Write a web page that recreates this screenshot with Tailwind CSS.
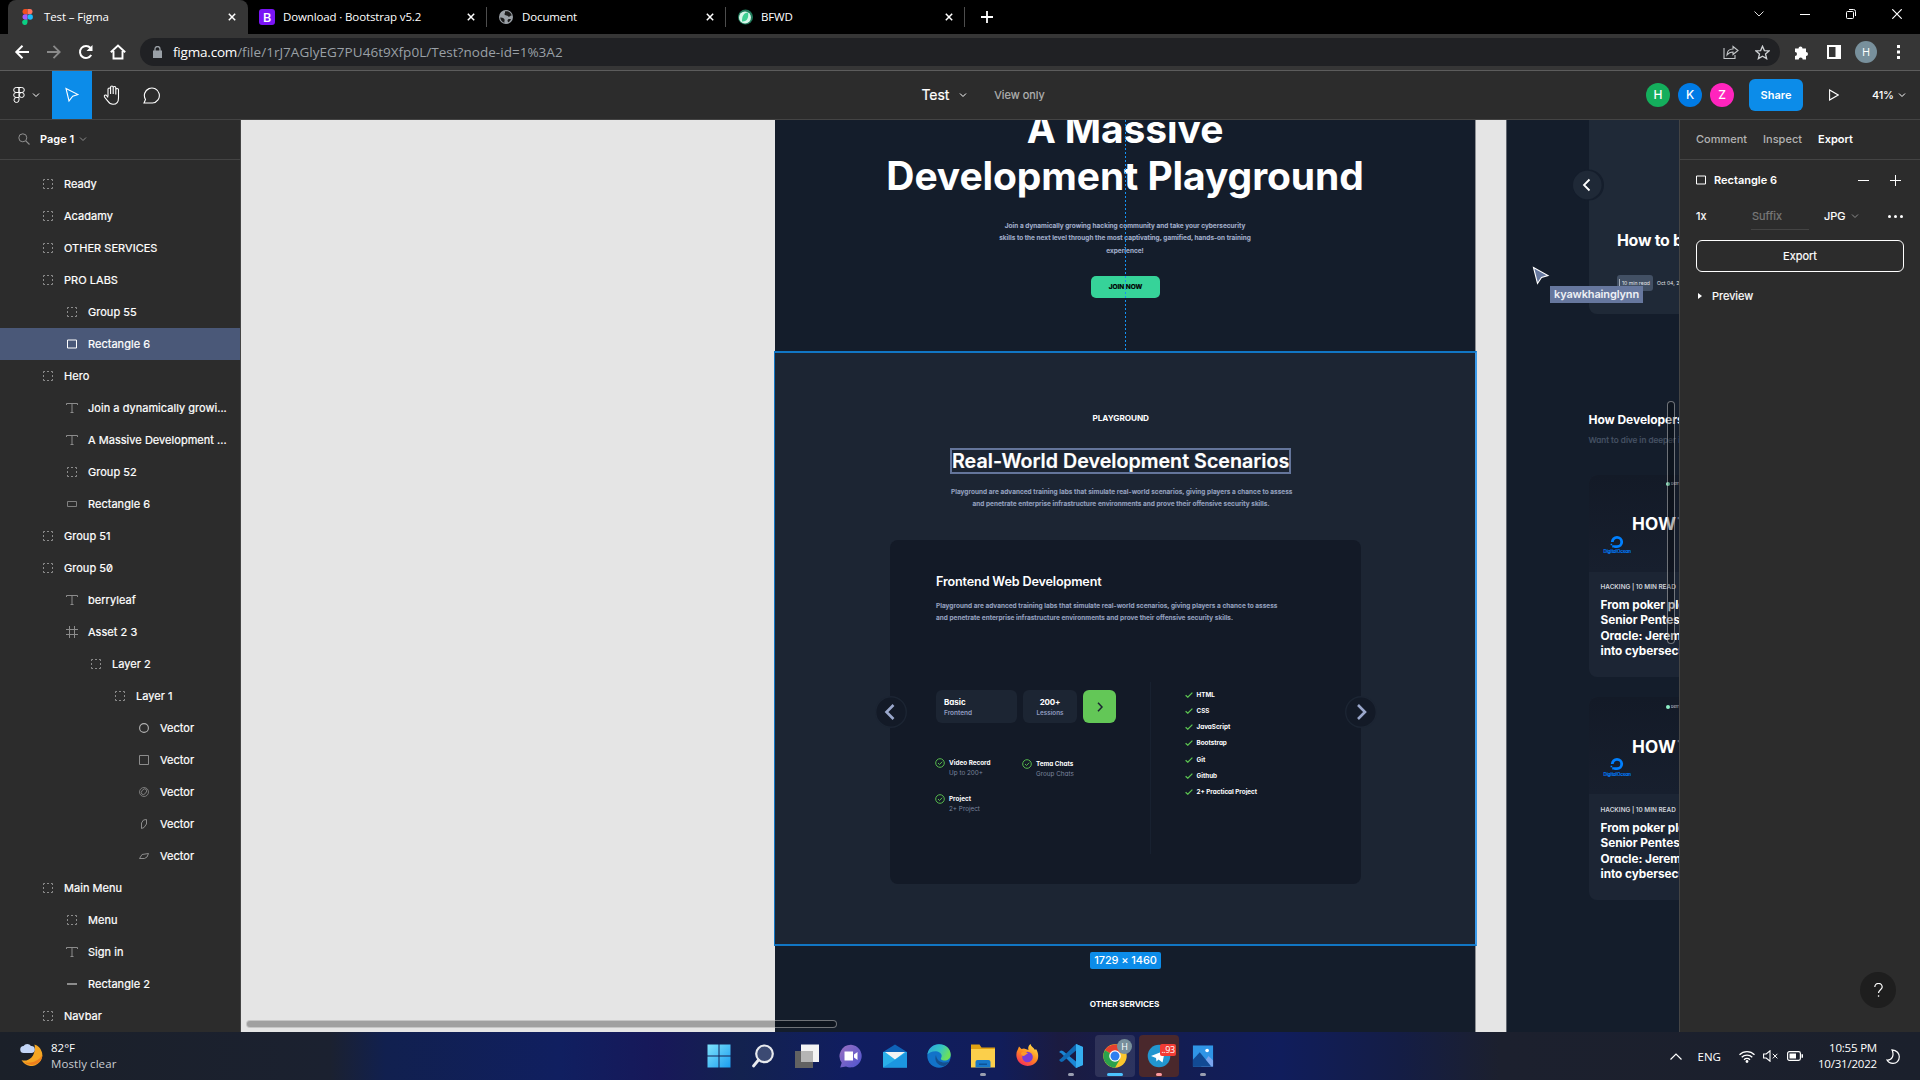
<!DOCTYPE html>
<html lang="en">
<head>
<meta charset="utf-8">
<title>Test – Figma</title>
<script src="https://cdn.jsdelivr.net/npm/@tailwindcss/browser@4"></script>
</head>
<body class="w-[1920px] h-[1080px] overflow-hidden flex flex-col bg-black font-['Inter',sans-serif] text-white">

<!-- shared icons -->
<svg class="hidden">
  <symbol id="i-group" viewBox="0 0 10 10"><path d="M.5 2V.5H2M4 .5h2M8 .5h1.5V2M9.500 4v2M9.500 8v1.500H8M6 9.500H4M2 9.500H.5V8M.5 6V4" fill="none" stroke="#8c8c8c"/></symbol>
  <symbol id="i-text" viewBox="0 0 12 10"><path d="M.5 2V.5h11V2M6 .5v9M4.500 9.500h3" fill="none" stroke="#8c8c8c"/></symbol>
  <symbol id="i-rect" viewBox="0 0 10 10"><path d="M.5 1h9v8h-9z" fill="none" stroke="currentColor"/></symbol>
  <symbol id="i-flat" viewBox="0 0 10 10"><path d="M.5 2.500h9v5h-9z" fill="none" stroke="#808080"/></symbol>
  <symbol id="i-line" viewBox="0 0 10 10"><path d="M0 5h10" stroke="#8c8c8c" stroke-width="2"/></symbol>
  <symbol id="i-frame" viewBox="0 0 12 12"><path d="M3.500 0v12M8.500 0v12M0 3.500h12M0 8.500h12" stroke="#8c8c8c"/></symbol>
  <symbol id="i-circle" viewBox="0 0 10 10"><circle cx="5" cy="5" r="4.400" fill="none" stroke="#b3b3b3" stroke-width="1.100"/></symbol>
  <symbol id="i-square" viewBox="0 0 10 10"><path d="M.5.5h9v9h-9z" fill="none" stroke="#8c8c8c"/></symbol>
  <symbol id="i-swirl" viewBox="0 0 10 10"><g fill="none" stroke="#8c8c8c" stroke-width=".8"><circle cx="5" cy="5" r="4.500"/><ellipse cx="5.200" cy="4.800" rx="3.200" ry="2.200" transform="rotate(-50 5 5)"/></g></symbol>
  <symbol id="i-leaf" viewBox="0 0 10 10"><path d="M2.500 9.500V4L4.500 1l3-.5V5L5 8.500z" fill="none" stroke="#8c8c8c"/></symbol>
  <symbol id="i-leaf2" viewBox="0 0 10 10"><path d="M.5 7.500L3 3.500l6.500-1L8 6 5.500 7.500z" fill="none" stroke="#8c8c8c"/></symbol>
  <symbol id="i-down" viewBox="0 0 8 8"><path d="M1 2.500l3 3 3-3" fill="none" stroke="currentColor"/></symbol>
  <symbol id="i-x" viewBox="0 0 8 8"><path d="M.8.8l6.400 6.400M7.200.8L.8 7.200" stroke="#fff" stroke-width="1.500"/></symbol>
  <symbol id="i-check" viewBox="0 0 8 6"><path d="M.6 3.200L2.800 5.200 7.400.6" fill="none" stroke="#5cc551" stroke-width="1.250"/></symbol>
  <symbol id="i-badge" viewBox="0 0 10 10"><g fill="none" stroke="#56b84c"><circle cx="5" cy="5" r="4.300"/><path d="M3 5l1.500 1.500L7.200 3.700"/></g></symbol>
  <symbol id="i-ocean" viewBox="0 0 14 14"><path d="M7 11.700A4.700 4.700 0 1 0 2.300 7" fill="none" stroke="#0080ff" stroke-width="2.800"/><path d="M4.300 10.300H7V13H4.300zM2.200 10.300h2.100v2.100H2.200zM.6 8.700h1.600v1.600H.6z" fill="#0080ff"/></symbol>
</svg>

<!-- browser tabs -->
<div class="h-[34px] shrink-0 flex items-stretch font-['Open_Sans',sans-serif] text-[11.5px] tracking-[-0.13px]">
  <div class="ml-2 w-[240px] flex items-center rounded-t-lg bg-[#363636] pl-[14px] pr-[12px]">
    <svg class="w-[11px] h-4 mr-[11px]" viewBox="0 0 11 16"><path d="M5.500 0H2.700a2.700 2.700 0 0 0 0 5.330h2.800z" fill="#f24e1e"/><path d="M5.500 0h2.800a2.700 2.700 0 0 1 0 5.330H5.500z" fill="#ff7262"/><path d="M5.500 5.330H2.700a2.700 2.700 0 0 0 0 5.330h2.800z" fill="#a259ff"/><circle cx="8.200" cy="8" r="2.700" fill="#1abcfe"/><path d="M5.500 10.660H2.700a2.680 2.680 0 1 0 2.800 2.700z" fill="#0acf83"/></svg>
    <span class="flex-1">Test – Figma</span><svg class="w-2 h-2"><use href="#i-x"/></svg>
  </div>
  <div class="w-[238px] flex items-center pl-[11px] pr-[11px]">
    <span class="size-4 rounded-[3px] bg-[#7a14f5] mr-2 grid place-items-center text-[13px] font-semibold leading-none">B</span>
    <span class="flex-1">Download · Bootstrap v5.2</span><svg class="w-2 h-2"><use href="#i-x"/></svg>
  </div>
  <div class="w-[239px] flex items-center pr-[11px]"><span class="w-px h-5 bg-[#4d4d4d] mr-3"></span>
    <svg class="w-[14px] h-[14px] mr-[9px]" viewBox="0 0 14 14"><circle cx="7" cy="7" r="7" fill="#9aa0a6"/><path d="M1.200 7.500C3 7.200 5 8 5.500 9.500c.5 1.200-.5 1.500 0 3.200C3 12 1.300 10 1.200 7.500zM6 1.500c3-.8 6 1 6.700 4-1.500-.2-1.600 1-2.700 1.200-1.200.2-.8-1.200-2.500-1.200S4.700 4 6 3zM9 9.500c1-.8 2-.6 3-.2-.6 1.400-1.400 2.300-2.700 3-.7-.8-1.200-2-.3-2.800z" fill="#1c1c1c"/></svg>
    <span class="flex-1">Document</span><svg class="w-2 h-2"><use href="#i-x"/></svg>
  </div>
  <div class="w-[239px] flex items-center pr-[11px]"><span class="w-px h-5 bg-[#4d4d4d] mr-3"></span>
    <svg class="w-[15px] h-4 mr-2" viewBox="0 0 15 16"><circle cx="7.500" cy="8" r="7.500" fill="#1f7a5a"/><circle cx="7" cy="8.500" r="6" fill="#d8f7ea"/><path d="M10 3.500C5.500 4 4 7 4 12.500c5 .5 7-4 6-9z" fill="#3ecf93"/></svg>
    <span class="flex-1">BFWD</span><svg class="w-2 h-2"><use href="#i-x"/></svg>
  </div>
  <div class="flex-1 flex items-center"><span class="w-px h-5 bg-[#4d4d4d] mr-4"></span>
    <svg class="w-3 h-3" viewBox="0 0 12 12"><path d="M6 0v12M0 6h12" stroke="#fff" stroke-width="1.800"/></svg>
  </div>
  <div class="flex items-start pt-[9px] pr-[18px] gap-9">
    <svg class="w-[10px] h-[10px]" viewBox="0 0 10 10"><path d="M.5 2.500L5 7l4.500-4.500" fill="none" stroke="#ddd"/></svg>
    <svg class="w-[10px] h-[10px]" viewBox="0 0 10 10"><path d="M0 5.500h10" stroke="#fff"/></svg>
    <svg class="w-[10px] h-[10px]" viewBox="0 0 10 10"><path d="M3 .5h4.500a2 2 0 0 1 2 2V7M1.500 2.500h5a1 1 0 0 1 1 1v5a1 1 0 0 1-1 1h-5a1 1 0 0 1-1-1v-5a1 1 0 0 1 1-1z" fill="none" stroke="#fff"/></svg>
    <svg class="w-[10px] h-[10px]" viewBox="0 0 10 10"><path d="M.3.3l9.400 9.400M9.700.3L.3 9.700" stroke="#fff" stroke-width="1.200"/></svg>
  </div>
</div>

<!-- address row -->
<div class="h-[37px] shrink-0 bg-[#363636] border-b border-[#5c5c5c] flex items-center pl-[14px] pr-[20px]">
  <div class="flex items-center gap-4 w-[126px]">
    <svg class="size-4" viewBox="0 0 16 16"><path d="M15 8H2.500M8.500 1.800L2.300 8l6.200 6.200" fill="none" stroke="#fff" stroke-width="2"/></svg>
    <svg class="size-4" viewBox="0 0 16 16"><path d="M1 8h12.500M7.500 1.800L13.700 8l-6.200 6.200" fill="none" stroke="#8a8a8a" stroke-width="1.800"/></svg>
    <svg class="size-4" viewBox="0 0 16 16"><path d="M13.200 11A6 6 0 1 1 12.500 4" fill="none" stroke="#fff" stroke-width="2"/><path d="M14.500 1v6h-6z" fill="#fff"/></svg>
    <svg class="size-4" viewBox="0 0 16 16"><path d="M3.500 7v7.500h9V7M.8 8.300L8 1.500l7.200 6.800" fill="none" stroke="#fff" stroke-width="1.900"/></svg>
  </div>
  <div class="w-[1640px] h-7 rounded-full bg-[#202124] flex items-center pl-[13px] pr-[10px]">
    <svg class="w-[9px] h-3 mr-[11px]" viewBox="0 0 9 12"><path d="M0 4.500h9V12H0z" fill="#9aa0a6"/><path d="M2 5V3a2.500 2.500 0 0 1 5 0v2" fill="none" stroke="#9aa0a6" stroke-width="1.300"/></svg>
    <span class="flex-1 font-['Open_Sans',sans-serif] text-[13.500px] tracking-[0.030px] text-[#9aa0a6]"><span class="text-white tracking-[-0.200px]">figma.com</span>/file/1rJ7AGlyEG7PU46t9Xfp0L/Test?node-id=1%3A2</span>
    <svg class="w-4 h-4 mr-4" viewBox="0 0 16 16"><path d="M1 4v10.500h11V11M10 2.500V5C6 5 4 7.500 4 11c1.500-2 3.300-3 6-3v2.500l5-4z" fill="none" stroke="#c4c7c9" stroke-width="1.100"/></svg>
    <svg class="w-[15px] h-[15px]" viewBox="0 0 16 16"><path d="M8 1.300l2 4.600 5 .4-3.800 3.300 1.200 4.900L8 11.900l-4.400 2.600 1.200-4.900L1 6.300l5-.4z" fill="none" stroke="#d0d3d6" stroke-width="1.400"/></svg>
  </div>
  <div class="flex-1 flex items-center justify-end">
    <svg class="size-[15px] mr-[18px]" viewBox="0 0 15 15"><path d="M1 3.500h3.500a2 2 0 1 1 4 0H12V7a2 2 0 1 1 0 4v3.500H8.700a2 2 0 1 0-4 0H1V11a2 2 0 1 0 0-4z" fill="#fff"/></svg>
    <svg class="size-[14px] mr-[14px]" viewBox="0 0 14 14"><path d="M0 0h14v14H0zM2 2v10h6.500V2z" fill="#fff" fill-rule="evenodd"/></svg>
    <span class="size-[22px] rounded-full bg-[#78909c] grid place-items-center text-[11px] font-['Open_Sans',sans-serif] mr-[20px]">H</span>
    <svg class="w-[3px] h-[14px]" viewBox="0 0 3 14"><path d="M0 0h3v3H0zM0 5.500h3v3H0zM0 11h3v3H0z" fill="#fff"/></svg>
  </div>
</div>

<!-- editor toolbar -->
<div class="h-[49px] shrink-0 bg-[#2c2c2c] border-b border-[#444] flex items-center">
  <div class="w-[52px] flex items-center pl-[13px]">
    <svg class="w-3 h-4" viewBox="0 0 12 16"><path d="M6 .5H3.200a2.500 2.500 0 0 0 0 5H6zM6 .5h2.800a2.500 2.500 0 0 1 0 5H6zM6 5.500H3.200a2.500 2.500 0 0 0 0 5H6zM8.700 5.500a2.500 2.500 0 1 1 0 5 2.500 2.500 0 0 1 0-5zM6 10.500H3.200A2.500 2.500 0 1 0 6 13z" fill="none" stroke="#fff"/></svg>
    <svg class="size-2 ml-[7px]"><use href="#i-down"/></svg>
  </div>
  <div class="w-10 h-full bg-[#0c8ce9] grid place-items-center"><svg class="w-[14px] h-4 " viewBox="0 0 14 16"><path d="M1 1.500l12 6-5.300 1.600L4 14z" fill="none" stroke="#fff" stroke-width="1.100"/></svg></div>
  <div class="w-10 grid place-items-center"><svg class="w-[19px] h-5" viewBox="0 0 19 20"><path d="M5 11.500V4.300a1.300 1.300 0 0 1 2.600 0V9 2.300a1.300 1.300 0 0 1 2.600 0V9 2.800a1.300 1.300 0 0 1 2.600 0V9.500 4.800a1.300 1.300 0 0 1 2.700 0V13c0 4-2 6.300-5.500 6.300-2.800 0-4-1.300-5-3L1.500 12C.8 10.300 2.300 9.500 3.400 10.300L5 12.500" fill="none" stroke="#fff" stroke-width="1.100"/></svg></div>
  <div class="w-10 grid place-items-center"><svg class="w-[18px] h-[17px]" viewBox="0 0 18 17"><path d="M1 16l1.500-3.500A7.500 7.500 0 1 1 9.500 16z" fill="none" stroke="#fff" stroke-width="1.100"/></svg></div>
  <div class="ml-[749.500px] flex items-center text-sm tracking-[-0.100px] [-webkit-text-stroke:0.200px]">Test<svg class="size-2 ml-[10px]"><use href="#i-down"/></svg></div>
  <span class="ml-[27px] flex-1 text-[11px] text-[#b3b3b3] [-webkit-text-stroke:0.200px]">View only</span>
  <div class="flex items-center gap-2 text-[12px] font-medium">
    <span class="size-6 rounded-full bg-[#14ae5c] grid place-items-center">H</span>
    <span class="size-6 rounded-full bg-[#007be5] grid place-items-center">K</span>
    <span class="size-6 rounded-full bg-[#ff24bd] grid place-items-center">Z</span>
  </div>
  <div class="ml-[15px] w-[54px] h-8 rounded-md bg-[#0c8ce9] grid place-items-center text-[11px] font-semibold">Share</div>
  <svg class="ml-[26px] w-[10px] h-3" viewBox="0 0 10 12"><path d="M.6 1v10L9.200 6z" fill="none" stroke="#fff" stroke-width="1.100"/></svg>
  <span class="ml-[33px] w-[20px] text-[11px] tracking-[-0.200px] whitespace-nowrap font-medium">41%</span>
  <svg class="size-2 ml-[6px] mr-[14px]"><use href="#i-down"/></svg>
</div>

<!-- workspace -->
<div class="h-[912px] shrink-0 flex">

  <!-- layers panel -->
  <aside class="w-[241px] shrink-0 bg-[#2c2c2c] border-r border-[#444] flex flex-col overflow-hidden">
    <div class="h-10 shrink-0 border-b border-[#444] flex items-center pl-[18px] pb-px">
      <svg class="w-[12px] h-[12px]" viewBox="0 0 12 12"><circle cx="4.800" cy="4.800" r="4" fill="none" stroke="#909090"/><path d="M7.800 7.800L11.500 11.500" stroke="#909090" stroke-width="1.100"/></svg>
      <span class="ml-[10px] text-[11px] font-semibold">Page 1</span>
      <svg class="size-2 ml-[5px] text-[#8c8c8c]"><use href="#i-down"/></svg>
    </div>
    <div id="layers" class="pt-2 text-[11px] leading-8 tracking-[0.035px] [-webkit-text-stroke:0.220px]"></div>
  </aside>

  <!-- canvas -->
  <main class="relative w-[1438px] shrink-0 bg-[#e5e5e5] overflow-hidden">

    <!-- landing page frame; origin of the canvas is (241,120) -->
    <section class="absolute left-[534px] top-0 w-[701px] h-full bg-[#141d2b] border-r border-[#8d8f94] overflow-hidden">
      <h1 class="absolute left-0 -top-[15px] w-full text-center text-[39px] leading-[47px] font-bold tracking-[-0.100px]">A Massive<br>Development Playground</h1>
      <p class="absolute left-0 top-[100px] w-full text-center text-[6.500px] leading-[12.300px] tracking-[0.020px] font-semibold text-[#a4b1cd] [-webkit-text-stroke:0.150px]">Join a dynamically growing hacking community and take your cybersecurity<br>skills to the next level through the most captivating, gamified, hands-on training<br>experience!</p>
      <div class="absolute left-[316px] top-[156px] w-[69px] h-[22px] rounded-[5px] bg-[#36d399] grid place-items-center text-[6.500px] leading-none pt-px font-bold text-black [-webkit-text-stroke:0.200px]">JOIN NOW</div>
      <div class="absolute left-0 top-[878.500px] w-[699px] text-center text-[8.200px] leading-[10px] font-bold tracking-[-0.060px]">OTHER SERVICES</div>
    </section>

    <!-- selected section -->
    <section class="absolute left-[533px] top-[231px] w-[703px] h-[595px] bg-[#1c2533] border-2 border-l border-[#1176c4] border-r-[#3b9bea]">
      <div class="absolute left-[317.500px] top-[60px] text-[8.200px] leading-[10px] font-bold tracking-[-0.060px]">PLAYGROUND</div>
      <h2 class="absolute left-[175px] top-[95px] w-[341px] h-[26px] border-2 border-[#64759b] text-center text-[19.700px] leading-[22px] font-semibold whitespace-nowrap [-webkit-text-stroke:0.200px]">Real-World Development Scenarios</h2>
      <p class="absolute left-[176px] top-[132.500px] w-[340px] text-center text-[6.500px] leading-[12.200px] tracking-[0.030px] font-semibold text-[#97a3c0] whitespace-nowrap [-webkit-text-stroke:0.150px]">Playground are advanced training labs that simulate real-world scenarios, giving players a chance to assess<br>and penetrate enterprise infrastructure environments and prove their offensive security skills.</p>

      <div class="absolute left-[115px] top-[187px] w-[471px] h-[344px] rounded-lg bg-[#131a27]">
        <h3 class="absolute left-[46px] top-[34px] text-[12.600px] leading-4 tracking-[-0.150px] font-semibold whitespace-nowrap">Frontend Web Development</h3>
        <p class="absolute left-[46px] top-[59.500px] text-[6.500px] leading-[12.200px] tracking-[0.030px] font-semibold text-[#97a3c0] whitespace-nowrap [-webkit-text-stroke:0.150px]">Playground are advanced training labs that simulate real-world scenarios, giving players a chance to assess<br>and penetrate enterprise infrastructure environments and prove their offensive security skills.</p>
        <div class="absolute left-[46px] top-[150px] flex gap-[6px] [font-feature-settings:'cv11'] font-semibold">
          <div class="w-[81px] h-[33px] rounded-md bg-[#1c2533] pl-2 pt-[6.500px]"><div class="text-[8px] leading-[11px] font-bold">Basic</div><div class="text-[6.500px] leading-[11px] text-[#909cc0]">Frontend</div></div>
          <div class="w-[54px] h-[33px] rounded-md bg-[#1c2533] pt-[6.500px] text-center"><div class="text-[8px] leading-[11px] font-bold tracking-[-0.200px]">200+</div><div class="text-[6.300px] leading-[11px] text-[#909cc0]">Lessions</div></div>
          <div class="w-[33px] h-[33px] rounded-md bg-[#63c757] grid place-items-center"><svg class="w-[6px] h-[10px]" viewBox="0 0 6 10"><path d="M1 .8L5 5 1 9.200" fill="none" stroke="#1c2433" stroke-width="1.500"/></svg></div>
        </div>
        <div class="absolute left-[45px] top-[218px] grid grid-cols-[87px_87px] gap-y-[16px] text-[6.350px] leading-[10px] [font-feature-settings:'cv11']">
          <div class="flex"><svg class="size-[10px] mr-1"><use href="#i-badge"/></svg><div><div class="font-bold">Video Record</div><div class="text-[#7c869f]">Up to 200+</div></div></div>
          <div class="flex pt-[1px]"><svg class="size-[10px] mr-1"><use href="#i-badge"/></svg><div><div class="font-bold">Tema Chats</div><div class="text-[#7c869f]">Group Chats</div></div></div>
          <div class="flex -mt-px"><svg class="size-[10px] mr-1"><use href="#i-badge"/></svg><div><div class="font-bold">Project</div><div class="text-[#7c869f]">2+ Project</div></div></div>
        </div>
        <div class="absolute left-[260px] top-[142px] w-px h-[172px] bg-[#182130]"></div>
        <ul class="absolute left-[294.500px] top-[146.700px] text-[6.300px] leading-[16.220px] font-bold [font-feature-settings:'cv11'] whitespace-nowrap">
          <li class="flex items-center gap-1"><svg class="w-2 h-[6px]"><use href="#i-check"/></svg>HTML</li>
          <li class="flex items-center gap-1"><svg class="w-2 h-[6px]"><use href="#i-check"/></svg>CSS</li>
          <li class="flex items-center gap-1"><svg class="w-2 h-[6px]"><use href="#i-check"/></svg>JavaScript</li>
          <li class="flex items-center gap-1"><svg class="w-2 h-[6px]"><use href="#i-check"/></svg>Bootstrap</li>
          <li class="flex items-center gap-1"><svg class="w-2 h-[6px]"><use href="#i-check"/></svg>Git</li>
          <li class="flex items-center gap-1"><svg class="w-2 h-[6px]"><use href="#i-check"/></svg>Github</li>
          <li class="flex items-center gap-1"><svg class="w-2 h-[6px]"><use href="#i-check"/></svg>2+ Practical Project</li>
        </ul>
        <svg class="absolute -left-[15px] top-[156px] size-8" viewBox="0 0 32 32"><circle cx="16" cy="16" r="15.300" fill="#131a27" stroke="#1c2533" stroke-width="1.400"/><path d="M18.500 9l-7 7 7 7" fill="none" stroke="#9ba8cc" stroke-width="2.600"/></svg>
        <svg class="absolute left-[455px] top-[156px] size-8" viewBox="0 0 32 32"><circle cx="16" cy="16" r="15.300" fill="#131a27" stroke="#1c2533" stroke-width="1.400"/><path d="M13 9l7 7-7 7" fill="none" stroke="#9ba8cc" stroke-width="2.600"/></svg>
      </div>
    </section>
    <div class="absolute left-[849px] top-[832px] w-[71px] h-[17px] rounded-[2px] bg-[#0c8ce9] text-center text-[11px] leading-[17px] font-medium tracking-[-0.100px]">1729 × 1460</div>
    <svg class="absolute left-[884px] top-0 w-px h-[232px]" viewBox="0 0 1 232"><path d="M.5 0v232" stroke="#1593f5" stroke-dasharray="2 2"/></svg>

    <!-- blog frame -->
    <section class="absolute left-[1265px] top-0 w-[174px] h-full bg-[#141d2b] border-l border-[#60656f] overflow-hidden [font-feature-settings:'cv11'] whitespace-nowrap">
      <div class="absolute left-[82px] top-0 w-[120px] h-[194px] rounded-bl-lg bg-[#1f2937]">
        <svg class="absolute -left-[17px] top-[49px] size-8" viewBox="0 0 32 32"><circle cx="16.500" cy="16" r="15.500" fill="#151e2c"/><circle cx="15.300" cy="16" r="14.300" fill="#1f2937"/><path d="M17.500 10.500L12 16l5.500 5.500" fill="none" stroke="#fff" stroke-width="1.800"/></svg>
        <div class="absolute left-[28px] top-[110.500px] text-[15.900px] leading-5 tracking-[-0.250px] font-bold">How to build</div>
        <div class="absolute left-[28px] top-[155px] flex items-center gap-1 text-[5.100px] leading-[16px] text-[#e3e6ea]"><span class="w-9 h-4 rounded-[3px] bg-[#425064] flex items-center pl-[2px]"><span class="w-px h-[9px] bg-[#a8b0bb] mr-[2px]"></span>10 min read</span>Oct 04, 2022</div>
      </div>
      <div class="absolute left-[81.500px] top-[291.500px] text-[12px] leading-4 font-bold tracking-[-0.050px]">How Developers learn</div>
      <div class="absolute left-[81.500px] top-[314px] text-[8.200px] leading-3 font-medium tracking-[-0.030px] text-[#465264] [-webkit-text-stroke:0.200px]">Want to dive in deeper into</div>

      <article class="absolute left-[82px] top-[355px] w-[120px] h-[202px] rounded-l-lg bg-[#1c2534] overflow-hidden">
        <div class="relative h-[97px] bg-gradient-to-b from-[#131a27] to-[#171f2e]">
          <div class="absolute left-[77px] top-[6px] flex items-center text-[4px] leading-[6px] text-gray-300"><span class="size-[4px] rounded-full bg-[#8ff0c8] mr-px"></span>berryleaf</div>
          <div class="absolute left-[43px] top-[38.500px] text-[17.200px] leading-5 font-bold tracking-[0.200px]">HOW<span class="ml-[1px] text-[#55606f]">TO</span></div>
          <svg class="absolute left-[21px] top-[60px] size-[14px]"><use href="#i-ocean"/></svg>
          <div class="absolute left-[14.500px] top-[74px] text-[4.500px] leading-[6px] text-[#0080ff] [-webkit-text-stroke:0.200px]">DigitalOcean</div>
        </div>
        <div class="pl-[11.500px] pt-[10px]"><div class="text-[6.400px] leading-[10px] font-semibold text-[#d0d4da]">HACKING | 10 MIN READ</div>
        <div class="mt-[6px] text-[11.800px] leading-[15.400px] font-bold tracking-[-0.050px]">From poker player to<br>Senior Pentester<br>Oracle: Jeremy<br>into cybersecurity</div></div>
      </article>

      <article class="absolute left-[82px] top-[577px] w-[120px] h-[203px] rounded-l-lg bg-[#1c2534] overflow-hidden">
        <div class="relative h-[97px] bg-gradient-to-b from-[#131a27] to-[#171f2e]">
          <div class="absolute left-[77px] top-[6.500px] flex items-center text-[4px] leading-[6px] text-gray-300"><span class="size-[4px] rounded-full bg-[#8ff0c8] mr-px"></span>berryleaf</div>
          <div class="absolute left-[43px] top-[39.500px] text-[17.200px] leading-5 font-bold tracking-[0.200px]">HOW<span class="ml-[1px] text-[#55606f]">TO</span></div>
          <svg class="absolute left-[21px] top-[60px] size-[14px]"><use href="#i-ocean"/></svg>
          <div class="absolute left-[14.500px] top-[75px] text-[4.500px] leading-[6px] text-[#0080ff] [-webkit-text-stroke:0.200px]">DigitalOcean</div>
        </div>
        <div class="pl-[11.500px] pt-[10.500px]"><div class="text-[6.400px] leading-[10px] font-semibold text-[#d0d4da]">HACKING | 10 MIN READ</div>
        <div class="mt-[6.500px] text-[11.800px] leading-[15.400px] font-bold tracking-[-0.050px]">From poker player to<br>Senior Pentester<br>Oracle: Jeremy<br>into cybersecurity</div></div>
      </article>
    </section>

    <!-- collaborator cursor -->
    <svg class="absolute left-[1291px] top-[146px] w-[18px] h-5" viewBox="0 0 18 20"><path d="M1.500 1.500l14.500 8-6.500 2L5.500 17.500z" fill="#66789f" stroke="#fff" stroke-width="1.100"/></svg>
    <div class="absolute left-[1309px] top-[166px] w-[93px] h-[17px] bg-[#66779e] text-center text-[11px] leading-[17px] tracking-[-0.140px] font-semibold text-[#eef0f5]">kyawkhainglynn</div>

    <!-- scrollbars -->
    <div class="absolute left-[5px] top-[900px] w-[591px] h-2 rounded-full bg-black/30 border border-white/40"></div>
    <div class="absolute left-[1426px] top-[281px] w-2 h-[243px] rounded-full bg-black/30 border border-white/40"></div>
  </main>

  <!-- export panel -->
  <aside class="relative w-[241px] shrink-0 bg-[#2c2c2c] border-l border-[#444] text-[11px]">
    <div class="h-10 border-b border-[#444] flex items-center gap-4 px-4 pb-px font-medium text-[#b3b3b3]"><span>Comment</span><span>Inspect</span><span class="font-semibold text-white">Export</span></div>
    <div class="h-10 flex items-center px-4">
      <svg class="size-[10px] mr-2"><use href="#i-rect"/></svg><span class="flex-1 font-semibold">Rectangle 6</span>
      <svg class="w-[11px] h-[11px] mr-[21px]" viewBox="0 0 11 11"><path d="M0 5.500h11" stroke="#fff"/></svg>
      <svg class="w-[11px] h-[11px] mr-[3px]" viewBox="0 0 11 11"><path d="M0 5.500h11M5.500 0v11" stroke="#fff"/></svg>
    </div>
    <div class="h-8 flex items-center pl-4 pr-[17px] [-webkit-text-stroke:0.200px]">
      <span class="w-[55px]">1x</span>
      <span class="w-[58px] h-[27px] mt-[1px] border-b border-[#444] leading-[26px] pl-px text-[#7a7a7a]">Suffix</span>
      <span class="ml-[15px]">JPG</span><svg class="size-2 ml-[5px] text-[#8c8c8c]"><use href="#i-down"/></svg>
      <svg class="ml-auto w-[15px] h-[3px]" viewBox="0 0 15 3"><circle cx="1.500" cy="1.500" r="1.500" fill="#fff"/><circle cx="7.500" cy="1.500" r="1.500" fill="#fff"/><circle cx="13.500" cy="1.500" r="1.500" fill="#fff"/></svg>
    </div>
    <div class="mx-4 mt-2 h-8 rounded-md border border-white grid place-items-center [-webkit-text-stroke:0.200px]">Export</div>
    <div class="h-8 mt-2 flex items-center pl-[18px] [-webkit-text-stroke:0.200px]"><svg class="w-1 h-[6px] mr-[10px]" viewBox="0 0 4 6"><path d="M0 0l4 3-4 3z" fill="#fff"/></svg>Preview</div>
    <div class="absolute right-6 bottom-6 size-9 rounded-full bg-[#1e1e1e] grid place-items-center"><svg class="w-[9px] h-[14px]" viewBox="0 0 9 14"><path d="M.8 4A3.600 3.600 0 0 1 8.200 4c0 2.500-3.700 3-3.700 6" fill="none" stroke="#fff" stroke-width="1.200"/><path d="M3.900 12.300h1.300v1.400H3.900z" fill="#fff"/></svg></div>
  </aside>
</div>

<!-- taskbar -->
<footer class="h-12 shrink-0 flex items-center font-['Open_Sans',sans-serif] text-[11.500px] leading-4 bg-[linear-gradient(90deg,#1b2029_0,#1b2130_330px,#11204f_385px,#101f60_560px,#171859_660px,#13224f_740px,#101d60_850px,#111d5a_1000px,#1b1b40_1060px,#141d50_1150px,#101d5c_1280px,#141d45_1400px,#1c202e_1500px,#1b202c_100%)]">
  <div class="w-[699px] flex items-center pl-[20px]">
    <svg class="w-6 h-[23px] mr-[7px] -mt-[3px]" viewBox="0 0 24 23"><path d="M14.500 1.500a11 11 0 1 1-13 15.500c6 2.500 15-3 13-15.500z" fill="#f5a623"/><path d="M4 19c5 2 14 0 18.500-7a11 11 0 0 1-18.500 7z" fill="#ee7f1d"/><path d="M4 10a3.500 3.500 0 0 1-.5-7A4.500 4.500 0 0 1 11 3a3.500 3.500 0 0 1 .5 7z" fill="#c3d5f7"/></svg>
    <div class="text-[#c9ccd1] tracking-[0.080px]"><div class="text-white tracking-normal">82°F</div><div>Mostly clear</div></div>
  </div>
  <div class="flex items-center gap-1 h-full">
    <div class="w-10 grid place-items-center"><svg class="size-6" viewBox="0 0 24 24"><defs><linearGradient id="win" x1="0" y1="0" x2="1" y2="1"><stop offset="0" stop-color="#7fe3fb"/><stop offset="1" stop-color="#1a9df0"/></linearGradient></defs><path d="M.5.5h11v11H.5zM12.500.5h11v11h-11zM.5 12.500h11v11H.5zM12.500 12.500h11v11h-11z" fill="url(#win)"/></svg></div>
    <div class="w-10 grid place-items-center"><svg class="size-6" viewBox="0 0 24 24"><circle cx="13.500" cy="9.800" r="8.300" fill="#3c4a73" stroke="#e8eaee" stroke-width="2.200"/><path d="M7.500 16L2.500 22" stroke="#e8eaee" stroke-width="2.800" stroke-linecap="round"/></svg></div>
    <div class="w-10 grid place-items-center"><svg class="size-6" viewBox="0 0 24 24"><path d="M0 7h18v17H0z" fill="#626262"/><path d="M6 .5h18V18H6z" fill="#f3f3f3"/><path d="M6 7h12v11H6z" fill="#b5b5b5"/></svg></div>
    <div class="w-10 grid place-items-center"><svg class="size-6" viewBox="0 0 24 24"><defs><linearGradient id="chat" x1="0" y1="0" x2="1" y2="1"><stop offset="0" stop-color="#9a6fc0"/><stop offset="1" stop-color="#4c54cf"/></linearGradient></defs><path d="M12 .8A11.300 11.300 0 1 1 7 22.500l-5.800 1 1.500-4.800A11.300 11.300 0 0 1 12 .8z" fill="url(#chat)"/><path d="M5.500 7.500h8.500v9H5.500zM15 10.500l3.500-2.500v8L15 13.500z" fill="#fff"/></svg></div>
    <div class="w-10 grid place-items-center"><svg class="size-6" viewBox="0 0 24 24"><path d="M0 8L12 .5 24 8v3H0z" fill="#0f63b8"/><path d="M0 8h24v15.500H0z" fill="#2ab0ea"/><path d="M2 8h20L12 15.500z" fill="#f3f3f3"/><path d="M0 23.500L24 8v15.500z" fill="#1b96e0"/></svg></div>
    <div class="w-10 grid place-items-center"><svg class="size-6" viewBox="0 0 24 24"><defs><linearGradient id="edge" x1="0" y1="0" x2="1" y2=".4"><stop offset="0" stop-color="#2ba3e0"/><stop offset=".6" stop-color="#36c6c0"/><stop offset="1" stop-color="#6ce05a"/></linearGradient></defs><circle cx="12" cy="12" r="11.700" fill="#1273c9"/><path d="M.4 10.500C1.500 4 6.500.3 12 .3 19 .3 23.700 5 23.700 10.500c0 4-3 6-6 6s-4.500-1.300-3.500-2.800C16 11 13 7.500 9 7.300 5 7.200 2 8.500.4 10.500z" fill="url(#edge)"/><path d="M9 11c-2 5 1 11 8 11 2.500-1 4.500-2.700 5.500-4.500-6 2.500-13 .5-13.500-6.500z" fill="#14508f"/></svg></div>
    <div class="relative w-10 h-10 grid place-items-center"><svg class="size-6" viewBox="0 0 24 24"><path d="M0 .5h8.500l2 3H24V8H0z" fill="#e0a113"/><path d="M0 5h24v18.500H0z" fill="#fbcf4b"/><path d="M4.500 23.500V18a2 2 0 0 1 2-2h11a2 2 0 0 1 2 2v5.500z" fill="#1777c9"/><path d="M8 19.500h8v1.500H8z" fill="#0d5296"/></svg><span class="absolute bottom-0 left-[17px] w-[6px] h-[3px] rounded-full bg-[#9a9fb0]"></span></div>
    <div class="w-10 grid place-items-center"><svg class="size-6" viewBox="0 0 24 24"><defs><linearGradient id="ff" x1=".8" y1="0" x2=".2" y2="1"><stop offset="0" stop-color="#ffe14a"/><stop offset=".5" stop-color="#ff8a1f"/><stop offset="1" stop-color="#f5245f"/></linearGradient></defs><path d="M3 5l1-2.500L6.500 5 9 4.500 13.500 6C12.500 3.500 14 1 15.500 0c.5 2.500 3 3.500 4.500 6l1-1c2 3 3 7 1.500 11A11.200 11.200 0 1 1 3 5z" fill="url(#ff)"/><circle cx="12.500" cy="13" r="5.300" fill="#7b3bd8"/><path d="M6 9c2-2 5-1.500 7 .5-2 0-2.500 2.500-4.500 2.500C7 12 6 10.500 6 9z" fill="#ff9a2a"/></svg></div>
    <div class="relative w-10 h-10 grid place-items-center"><svg class="size-6" viewBox="0 0 24 24"><path d="M17 0l7 3v18l-7 3L2.500 9.500 0 8l2-1.500L4 7l13 10.500v-11z" fill="#1a86d4"/><path d="M17 0L2 14.500 0 16l2 2 2-.5L17 6.500z" fill="#0f6ab5"/><path d="M17 0l7 3v18l-7 3z" fill="#35aef0"/></svg><span class="absolute bottom-0 left-[17px] w-[6px] h-[3px] rounded-full bg-[#9a9fb0]"></span></div>
    <div class="relative w-10 h-[42px] rounded bg-white/10 grid place-items-center"><svg class="size-6" viewBox="0 0 24 24"><circle cx="12" cy="12" r="11.700" fill="#fbc72d"/><path d="M12 12L1.900 6.200A11.700 11.700 0 0 1 22.100 6.200z" fill="#e6402f"/><path d="M12 12L1.900 6.200A11.700 11.700 0 0 0 12 23.700L17 15z" fill="#2ba24c"/><circle cx="12" cy="12" r="5.800" fill="#fff"/><circle cx="12" cy="12" r="4.500" fill="#2d7ff0"/></svg><span class="absolute left-[22px] top-[4px] size-[15px] rounded-full bg-[#78909c] text-[9px] leading-[15px] text-center">H</span><span class="absolute bottom-px left-3 w-4 h-[3px] rounded-full bg-[#4cc2ff]"></span></div>
    <div class="relative w-10 h-[42px] rounded bg-[#4a282c] grid place-items-center"><svg class="size-6" viewBox="0 0 24 24"><circle cx="12" cy="12" r="11.300" fill="#2296cf"/><path d="M4 12l14-5.500-2.500 12-4-3-2 2-.5-3.500z" fill="#fff"/></svg><span class="absolute left-[21px] top-[9px] w-4 h-3 rounded-[2px] bg-[#f23c34] text-[9px] leading-3 text-center tracking-tighter">..93</span><span class="absolute bottom-px left-[17px] w-[6px] h-[3px] rounded-full bg-[#ff9a9e]"></span></div>
    <div class="relative w-10 h-10 grid place-items-center"><svg class="size-[22px]" viewBox="0 0 22 24"><path d="M0 .5h22v23H0z" fill="#2f95e6"/><path d="M9 23.500L17 12l5 5v6.500z" fill="#7aa5ee"/><path d="M0 16L7.500 8 20 23.500H0z" fill="#124a94"/><circle cx="15.500" cy="6" r="2" fill="#fff"/></svg><span class="absolute bottom-0 left-[17px] w-[6px] h-[3px] rounded-full bg-[#9a9fb0]"></span></div>
  </div>
  <div class="flex-1 flex items-center justify-end pr-[20px]">
    <svg class="w-3 h-[7px] mr-4" viewBox="0 0 12 7"><path d="M.5 6.500L6 1l5.500 5.500" fill="none" stroke="#fff" stroke-width="1.200"/></svg>
    <span class="mr-[18px] pt-[2px]">ENG</span>
    <svg class="w-4 h-[13px] mr-2" viewBox="0 0 16 13"><g fill="none" stroke="#fff" stroke-width="1.300"><path d="M.5 4.800a10.500 10.500 0 0 1 15 0M2.700 7.300a7.500 7.500 0 0 1 10.600 0M5 9.700a4.300 4.300 0 0 1 6 0"/></g><circle cx="8" cy="11.500" r="1.400" fill="#fff"/></svg>
    <svg class="w-4 h-3 mr-2" viewBox="0 0 16 12"><path d="M.6 4h2.600L7 .8v10.400L3.200 8H.6z" fill="none" stroke="#fff" stroke-width="1.100"/><path d="M9.800 3.800l4.600 4.600M14.400 3.800L9.800 8.400" stroke="#fff"/></svg>
    <svg class="w-4 h-[10px] mr-[15px]" viewBox="0 0 16 10"><rect x=".6" y=".6" width="12.800" height="8.800" rx="1.800" fill="none" stroke="#fff" stroke-width="1.200"/><path d="M2.500 2.500H9v5H2.500zM14.500 3.300H16v3.400h-1.500z" fill="#fff"/></svg>
    <div class="text-right tracking-[-0.200px]"><div>10:55 PM</div><div>10/31/2022</div></div>
    <svg class="ml-[9px] w-[14px] h-[15px]" viewBox="0 0 14 15"><path d="M6 .8c5 .2 7.300 4 7.300 7C13.300 12 10.500 14.300 7 14.300c-3 0-5-1.300-6-3.300 5 .5 7.500-4.500 5-10.200z" fill="none" stroke="#fff" stroke-width="1.200"/></svg>
  </div>
</footer>

<script>
// [name, icon, depth, selected]
const layers = [
  ['Ready','group',0],['Acadamy','group',0],['OTHER SERVICES','group',0],['PRO LABS','group',0],
  ['Group 55','group',1],['Rectangle 6','rect',1,true],['Hero','group',0],
  ['Join a dynamically growi...','text',1],['A Massive Development ...','text',1],['Group 52','group',1],['Rectangle 6','flat',1],
  ['Group 51','group',0],['Group 50','group',0],['berryleaf','text',1],['Asset 2 3','frame',1],
  ['Layer 2','group',2],['Layer 1','group',3],['Vector','circle',4],['Vector','square',4],['Vector','swirl',4],['Vector','leaf',4],['Vector','leaf2',4],
  ['Main Menu','group',0],['Menu','group',1],['Sign in','text',1],['Rectangle 2','line',1],['Navbar','group',0]
];
const indent = ['pl-[42px]','pl-[66px]','pl-[90px]','pl-[114px]','pl-[138px]'];
const wide = ['text','frame'];
document.getElementById('layers').innerHTML = layers.map(([name, icon, depth, selected]) =>
  `<div class="h-8 flex items-center whitespace-nowrap ${indent[depth]} ${selected ? 'bg-[#4a5878]' : ''}">
    <svg class="mr-[10px] ${wide.includes(icon) ? 'size-[12px]' : 'w-3 h-[10px]'}"><use href="#i-${icon}"/></svg><span class="${name === 'Group 50' ? "[font-feature-settings:'zero']" : ''}">${name}</span></div>`).join('');
</script>
</body>
</html>
